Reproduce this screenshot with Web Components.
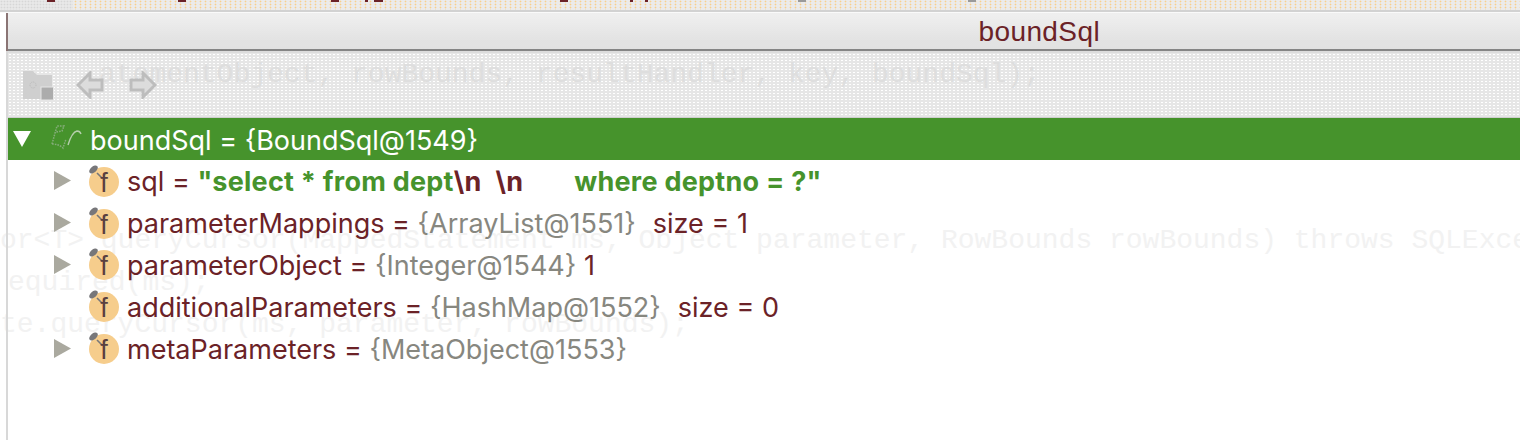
<!DOCTYPE html>
<html><head><meta charset="utf-8"><style>
html,body{margin:0;padding:0;background:#fff;}
body{width:1520px;height:440px;overflow:hidden;font-family:Inter,"Noto Sans",sans-serif;}
</style></head><body>
<debug-window>
  <var-row slot="rows" open name="boundSql" ref="{BoundSql@1549}" selected></var-row>
  <var-row slot="rows" expandable name="sql" str='"select * from dept' ></var-row>
  <var-row slot="rows" expandable name="parameterMappings" ref="{ArrayList@1551}" extra="size = 1"></var-row>
  <var-row slot="rows" expandable name="parameterObject" ref="{Integer@1544}" plain="1"></var-row>
  <var-row slot="rows" name="additionalParameters" ref="{HashMap@1552}" extra="size = 0"></var-row>
  <var-row slot="rows" expandable name="metaParameters" ref="{MetaObject@1553}"></var-row>
</debug-window>
<script>
class TopStrip extends HTMLElement{constructor(){super();this.attachShadow({mode:'open'}).innerHTML=`<style>
:host{display:flex;height:13px;box-sizing:border-box;background:#ebebeb;border-bottom:1px solid #fafafa;position:relative;overflow:hidden}
.first{width:73px;flex:none;height:10px;background:radial-gradient(circle,#d6d6d6 .8px,transparent 1.1px) 0 0/3px 3px,#e8e8e8}
.bg{flex:1;height:10px;background:radial-gradient(circle,#f8cf8e .8px,transparent 1.1px) 0 0/5px 3px,#ebebeb}
.line{position:absolute;left:0;right:0;bottom:0;height:2px;background:#d2d2d2}
i{position:absolute;top:0;height:2px;background:#6b2227}
</style><div class="first"></div><div class="bg"></div><div class="line"></div>
<i style="left:47px;width:8px"></i><i style="left:178px;width:8px"></i><i style="left:331px;width:8px"></i><i style="left:365px;width:3px"></i><i style="left:374px;width:9px"></i><i style="left:560px;width:8px"></i><i style="left:630px;width:3px"></i><i style="left:645px;width:3px"></i><i style="left:798px;width:8px;background:#9a9a9a"></i><i style="left:968px;width:8px;background:#9a9a9a"></i>`;}}
customElements.define('top-strip',TopStrip);

class TitleBar extends HTMLElement{constructor(){super();this.attachShadow({mode:'open'}).innerHTML=`<style>
:host{display:flex;height:38px;box-sizing:border-box;border-bottom:2px solid #858585;justify-content:flex-end;align-items:center;position:relative;padding:0 420px 0 0;
background:radial-gradient(circle,#efefef .6px,transparent .9px) 0 0/2px 2px,linear-gradient(#efefef 0,#ececec 12%,#cdcdcd 75%,#cbcbcb 100%);box-shadow:-2px 0 0 #8a7474}
span{font:28px/1 "Liberation Sans",Arial,sans-serif;color:#6b2227;letter-spacing:.4px;position:relative;top:1px}
</style><span><slot></slot></span>`;}}
customElements.define('title-bar',TitleBar);

class ToolBar extends HTMLElement{constructor(){super();this.attachShadow({mode:'open'}).innerHTML=`<style>
:host{display:flex;height:67px;box-sizing:border-box;border-top:2px solid #dcdcdc;border-bottom:1px solid #cfcfcf;align-items:center;padding:0 0 0 15px;background:radial-gradient(circle,#fff .6px,transparent .9px) 0 0/4px 3px,#e6e6e6;position:relative}
svg{display:block;flex:none;position:relative;z-index:1}
.g{position:absolute;left:91px;top:8px;font:28px/1 "Liberation Mono",monospace;white-space:pre;color:#dedede}
</style>
<div class="g">atementObject, rowBounds, resultHandler, key, boundSql);</div>
<svg width="31" height="29" viewBox="0 0 31 29"><path d="M0 0h10l4 4h15v19h-11v5H0z" fill="#cfcfcf"/><circle cx="10" cy="14" r="3" fill="none" stroke="#bbb" stroke-dasharray="1 1"/><rect x="18" y="16" width="12.5" height="13" fill="#acacac" stroke="#e6e6e6"/></svg>
<svg width="28" height="28" viewBox="0 0 28 28" style="margin-left:22px"><path d="M14 2 2 14l12 12v-7h12V9H14z" fill="#dcdcdc" stroke="#bdbdbd" stroke-width="3"/></svg>
<svg width="28" height="28" viewBox="0 0 28 28" style="margin-left:25px"><path d="M14 2 26 14 14 26v-7H2V9h12z" fill="#dcdcdc" stroke="#bdbdbd" stroke-width="3"/></svg>`;}}
customElements.define('tool-bar',ToolBar);

class FIcon extends HTMLElement{constructor(){super();this.attachShadow({mode:'open'}).innerHTML=`<style>
:host{display:block;width:32px;height:34px;position:relative}
svg{display:block}
text{font:27px "Liberation Sans",sans-serif;fill:#5a4040}
</style><svg width="32" height="34" viewBox="0 0 32 34"><circle cx="16" cy="19" r="15" fill="#f6cd8c"/><ellipse cx="5.5" cy="6.5" rx="5" ry="3" transform="rotate(-40 5.5 6.5)" fill="#77777a"/><path d="M9 10l5 5" stroke="#77777a" stroke-width="1.6"/><text x="16" y="29" text-anchor="middle">f</text></svg>`;}}
customElements.define('f-icon',FIcon);

class VarRow extends HTMLElement{
 connectedCallback(){
  const a=n=>this.getAttribute(n), sel=this.hasAttribute('selected'), open=this.hasAttribute('open'), exp=this.hasAttribute('expandable');
  let tri='';
  if(open) tri=`<svg width="18" height="16" viewBox="0 0 18 16"><path d="M0 0h18L9 16z" fill="#fff"/></svg>`;
  else if(exp) tri=`<svg width="17" height="19" viewBox="0 0 17 19"><path d="M0 0l17 9.5L0 19z" fill="#aaa99f"/></svg>`;
  let body;
  if(a('str')){
   body=`<span class="n">${a('name')} = </span><b>"select * from dept<em>\\n</em><span class="g1"></span><em>\\n</em><span class="g2"></span>where deptno = ?"</b>`;
  } else {
   body=`<span class="n">${a('name')}</span><span class="e"> = </span><span class="r">${a('ref')}</span>`+(a('plain')?`<span class="n"> ${a('plain')}</span>`:'')+(a('extra')?`<span class="n x">${a('extra')}</span>`:'');
  }
  const icon=sel?`<svg width="32" height="28" viewBox="0 0 32 28"><path d="M1 22 6 4h7l-2 5-6 1M1 22q7 0 11 4l3-9" fill="none" stroke="#86ad7b" stroke-width="1.5" stroke-dasharray="1.6 1.1"/><path d="M17 23q4-13 9-14 3 0 4 3" fill="none" stroke="#b5cfac" stroke-width="1.4"/></svg>`:`<f-icon></f-icon>`;
  this.attachShadow({mode:'open'}).innerHTML=`<style>
  :host{display:flex;align-items:center;height:${sel?42:41.8}px;white-space:pre;font-size:27px;color:#6b2227;background:${sel?'#46932c':'transparent'}}
  .tw{width:${sel?44:63}px;flex:none;display:flex;justify-content:${sel?'flex-start':'flex-end'};padding-left:7px;box-sizing:border-box}
  .ic{flex:none;margin-left:${sel?-1:17}px;margin-right:${sel?7:8}px;width:32px;position:relative;top:${sel?0:-1}px}
  .txt{position:relative;top:1px;${sel?'':'margin-left:-1px;'}}
  .r{color:#87877f}.e{color:#6b2227}
  :host([selected]) span{color:#fff}
  b{color:#46932c;font-weight:700;letter-spacing:.25px}
  em{font-style:normal;color:#6b2227}
  .g1{display:inline-block;width:14px}.g2{display:inline-block;width:51px}
  .x{margin-left:17px}
  </style><div class="tw" style="${sel?'margin-left:-2px;width:46px':''}">${tri}</div><div class="ic">${icon}</div><div class="txt">${body}</div>`;
 }
}
customElements.define('var-row',VarRow);

class DebugWindow extends HTMLElement{constructor(){super();this.attachShadow({mode:'open'}).innerHTML=`<style>
:host{display:block;width:1520px;height:440px;position:relative;overflow:hidden;background:#fff}
.frame{display:flex;flex-direction:column;height:427px;position:relative}
.main{display:flex;flex-direction:column;flex:1;border-left:2px solid #d8d8d8;margin-left:6px}
.rows{display:flex;flex-direction:column}
.ghost{position:absolute;font:28px/1 "Liberation Mono",monospace;white-space:pre;color:#f2f2f2;left:0}
</style>
<top-strip></top-strip>
<div class="ghost" style="top:227px">or&lt;T&gt; queryCursor(MappedStatement ms, Object parameter, RowBounds rowBounds) throws SQLExce</div>
<div class="ghost" style="top:269px;left:8px">equired(ms);</div>
<div class="ghost" style="top:311px">te.queryCursor(ms, parameter, rowBounds);</div>
<div class="frame"><div class="main">
<title-bar>boundSql</title-bar>
<tool-bar></tool-bar>
<div class="rows"><slot name="rows"></slot></div>
</div></div>`;}}
customElements.define('debug-window',DebugWindow);
</script>
</body></html>
